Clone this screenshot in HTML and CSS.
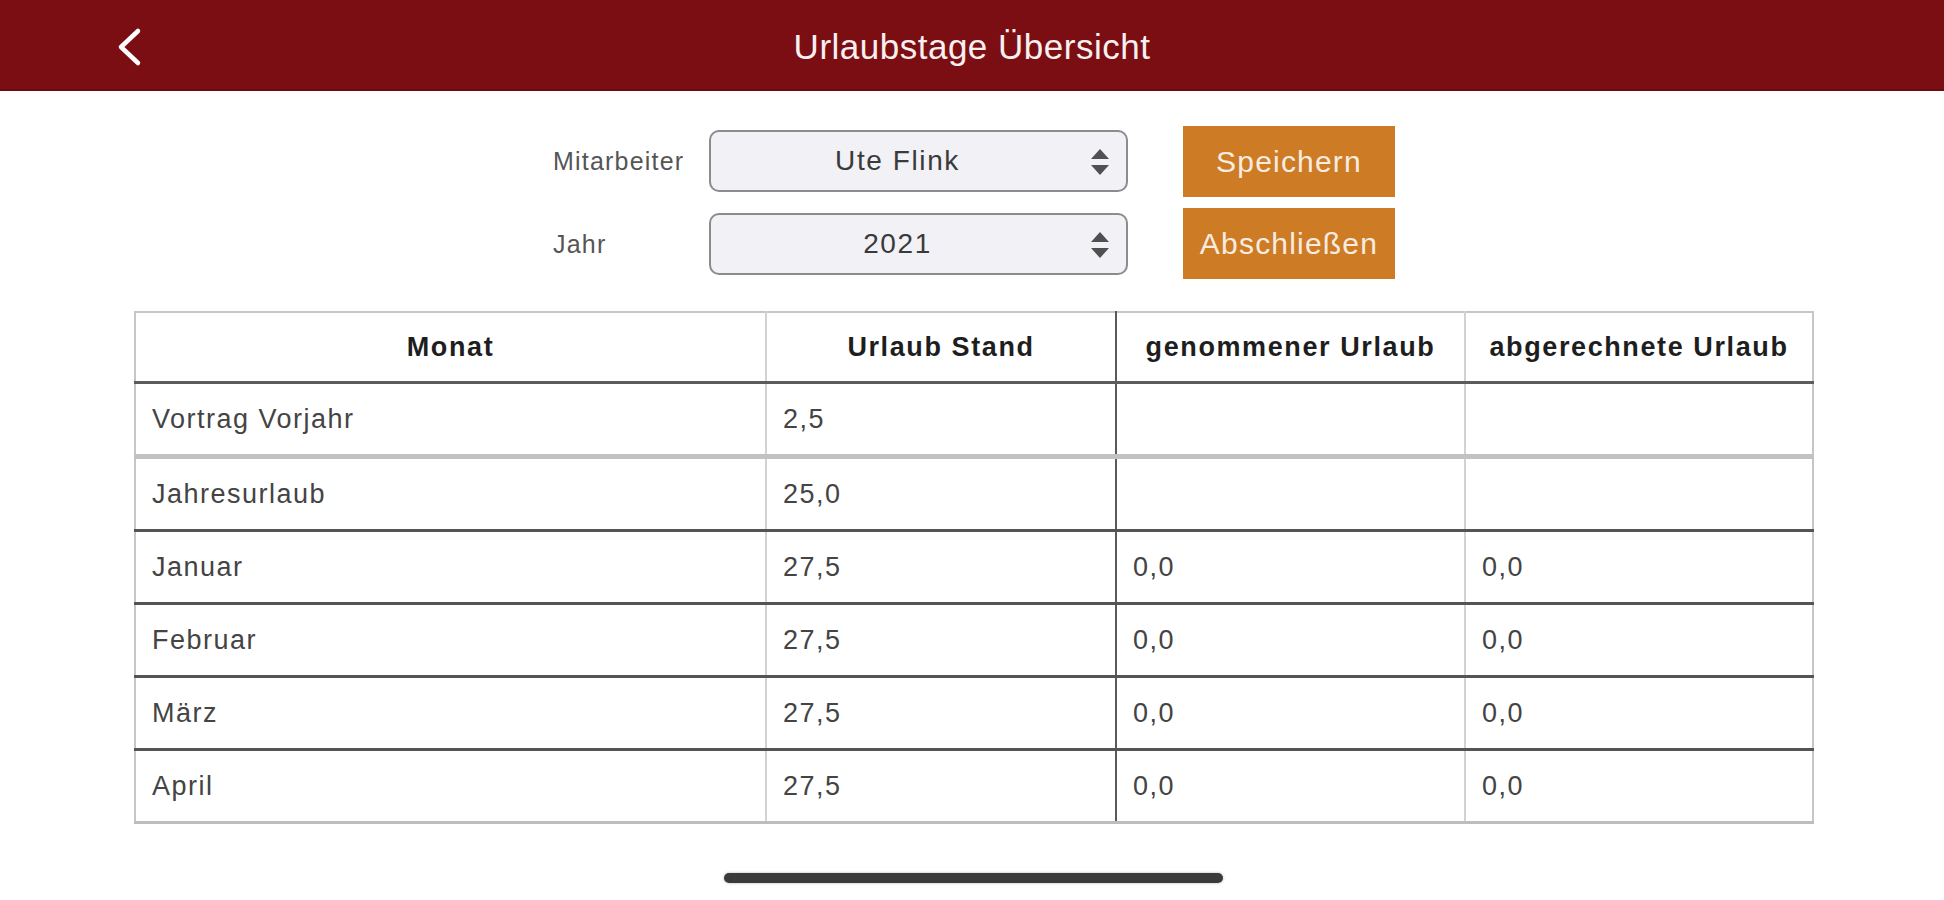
FILE: index.html
```html
<!DOCTYPE html>
<html lang="de">
<head>
<meta charset="utf-8">
<title>Urlaubstage Übersicht</title>
<link rel="stylesheet" href="styles.css">
</head>
<body>
<header class="navbar">
  <button class="back" aria-label="Zurück">
    <svg width="30" height="40" viewBox="0 0 30 40"><path d="M24 4 L7 20 L24 36" fill="none" stroke="#ffffff" stroke-width="4.5" stroke-linecap="round" stroke-linejoin="round"/></svg>
  </button>
  <h1 class="title">Urlaubstage Übersicht</h1>
</header>

<main class="content">
  <section class="controls">
    <div class="fields">
      <label class="label">Mitarbeiter</label>
      <div class="select"><span class="select-value">Ute Flink</span>
        <svg class="updown" width="20" height="28" viewBox="0 0 20 28"><path d="M10 1 L19 11 L1 11 Z" fill="#505050"/><path d="M10 27 L19 17 L1 17 Z" fill="#505050"/></svg>
      </div>
      <label class="label">Jahr</label>
      <div class="select"><span class="select-value">2021</span>
        <svg class="updown" width="20" height="28" viewBox="0 0 20 28"><path d="M10 1 L19 11 L1 11 Z" fill="#505050"/><path d="M10 27 L19 17 L1 17 Z" fill="#505050"/></svg>
      </div>
    </div>
    <div class="buttons">
      <button class="btn">Speichern</button>
      <button class="btn">Abschließen</button>
    </div>
  </section>

  <table class="grid">
    <colgroup>
      <col class="c1"><col class="c2"><col class="c3"><col class="c4">
    </colgroup>
    <thead>
      <tr><th>Monat</th><th class="l-light">Urlaub Stand</th><th class="l-dark">genommener Urlaub</th><th class="l-light">abgerechnete Urlaub</th></tr>
    </thead>
    <tbody>
      <tr class="r-light"><td>Vortrag Vorjahr</td><td class="l-light">2,5</td><td class="l-dark"></td><td class="l-light"></td></tr>
      <tr><td>Jahresurlaub</td><td class="l-light">25,0</td><td class="l-dark"></td><td class="l-light"></td></tr>
      <tr><td>Januar</td><td class="l-light">27,5</td><td class="l-dark">0,0</td><td class="l-light">0,0</td></tr>
      <tr><td>Februar</td><td class="l-light">27,5</td><td class="l-dark">0,0</td><td class="l-light">0,0</td></tr>
      <tr><td>März</td><td class="l-light">27,5</td><td class="l-dark">0,0</td><td class="l-light">0,0</td></tr>
      <tr class="last"><td>April</td><td class="l-light">27,5</td><td class="l-dark">0,0</td><td class="l-light">0,0</td></tr>
    </tbody>
  </table>
</main>

<div class="home-indicator"></div>
</body>
</html>
```

FILE: styles.css
```css
html, body {
  margin: 0;
  padding: 0;
  background: #ffffff;
}
body {
  width: 1944px;
  height: 900px;
  overflow: hidden;
  font-family: "Liberation Sans", Arial, sans-serif;
  color: #333333;
  position: relative;
}

.navbar {
  height: 89px;
  background: #7b0e13;
  border-bottom: 2px solid #6c0a0e;
  display: flex;
  align-items: center;
  justify-content: center;
  position: relative;
}
.back {
  position: absolute;
  left: 114px;
  top: 27px;
  padding: 0;
  margin: 0;
  border: 0;
  background: transparent;
  width: 30px;
  height: 40px;
}
.back svg { display: block; }
.title {
  margin: 0;
  font-size: 35px;
  font-weight: 400;
  letter-spacing: 0.5px;
  color: #f8f0f0;
  line-height: 1;
  padding-top: 4px;
}

.content {
  padding-top: 35px;
}

.controls {
  display: flex;
  justify-content: center;
  align-items: center;
  gap: 55px;
  padding-left: 4px;
}
.fields {
  display: grid;
  grid-template-columns: 156px 419px;
  row-gap: 21px;
  align-items: center;
}
.label {
  font-size: 25px;
  letter-spacing: 1.2px;
  color: #555555;
}
.select {
  box-sizing: border-box;
  height: 62px;
  border: 2px solid #8c8c8c;
  border-radius: 10px;
  background: #f1f1f6;
  display: flex;
  align-items: center;
  position: relative;
  padding-right: 42px;
}
.select-value {
  flex: 1;
  text-align: center;
  font-size: 28px;
  letter-spacing: 1.6px;
  color: #3a3a3a;
}
.updown {
  position: absolute;
  right: 16px;
  top: 16px;
}

.buttons {
  display: flex;
  flex-direction: column;
  gap: 11px;
}
.btn {
  width: 212px;
  height: 71px;
  border: 0;
  margin: 0;
  padding: 0;
  background: #ce7b25;
  color: #f8ece0;
  font-family: "Liberation Sans", Arial, sans-serif;
  font-size: 30px;
  letter-spacing: 1.2px;
}

.grid {
  margin-top: 32px;
  margin-left: 134px;
  width: 1678px;
  table-layout: fixed;
  border-collapse: collapse;
  border: 2px solid #c6c6c6;
}
.c1 { width: 631px; }
.c2 { width: 350px; }
.c3 { width: 349px; }
.c4 { width: 348px; }

.grid th {
  height: 68px;
  padding: 0;
  font-size: 27px;
  font-weight: 700;
  letter-spacing: 1.6px;
  color: #1e1e1e;
  text-align: center;
  border-bottom: 3px solid #5c5c5c;
}
.grid td {
  height: 70px;
  padding: 0 0 0 16px;
  font-size: 27px;
  letter-spacing: 1.5px;
  color: #444444;
  border-bottom: 3px solid #545454;
}
.grid tr.r-light td {
  border-bottom: 5px solid #c2c2c2;
}
.grid tr.last td {
  border-bottom: 3px solid #bdbdbd;
}
.l-light { border-left: 2px solid #d2d2d2; }
.l-dark { border-left: 2px solid #5a5a5a; }

.home-indicator {
  position: absolute;
  left: 724px;
  top: 873px;
  width: 499px;
  height: 10px;
  border-radius: 5px;
  background: #3a3a3a;
  box-shadow: 0 0 3px rgba(0,0,0,0.3);
}
```
